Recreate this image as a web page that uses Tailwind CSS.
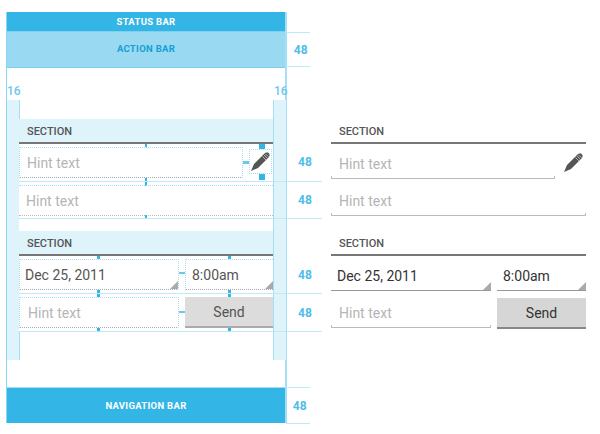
<!DOCTYPE html>
<html>
<head>
<meta charset="utf-8">
<script src="https://cdn.jsdelivr.net/npm/@tailwindcss/browser@4"></script>
</head>
<body class="bg-white">
<div class="w-[600px] h-[434px] overflow-hidden flex font-['Roboto',sans-serif] text-[#555]">

  <!-- Blueprint -->
  <div class="w-[325px] shrink-0 pl-[6px] pt-[12px]">
    <div class="relative w-[281px] h-[411px] flex flex-col border-l border-r-2 border-l-[#8bd6f3] border-r-[#a5dff5]">
      <div class="h-[20px] pt-[1px] bg-[#33b5e5] flex items-center justify-center text-white text-[9.5px] font-bold tracking-[0.3px] border-b border-[#7fd0ee]">STATUS BAR</div>
      <div class="relative h-[36px] bg-[#99d9f2] flex items-center justify-center text-[#12a0d8] text-[9.5px] font-bold tracking-[0.3px] border-b border-[#7fd0ee]">
        ACTION BAR
        <div class="absolute left-[279px] top-0 w-[24px] h-full border-t border-b border-[#bfe9f8] flex items-center justify-end pr-[2px] text-[#4dbde9] text-[12px] font-bold">48</div>
      </div>
      <div class="relative flex-1">
        <span class="absolute left-0 top-[14px] text-[12px] font-medium text-[#6cc7ec]">16</span>
        <span class="absolute left-[267px] top-[14px] text-[12px] font-medium text-[#6cc7ec]">16</span>
        <div class="absolute left-0 top-[32px] w-[13px] h-[260px] bg-[#dff3fa] border-r border-[#a5dff5]"></div>
        <div class="absolute left-[266px] top-[32px] w-[13px] h-[260px] bg-[#dff3fa] border-l border-[#a5dff5]"></div>

        <div class="absolute left-[12px] top-[51px] w-[254px] bg-white">
          <!-- section 1 -->
          <div class="h-[25px] pl-[8px] pt-[3px] flex items-center bg-[#dff3fa] border-b-2 border-[#777] text-[11px] font-medium text-[#555]">SECTION</div>
          <div class="relative h-[38px] border-b border-[#bfe9f8]">
            <div class="absolute left-[126px] top-0 w-[2px] h-[3px] bg-[#33b5e5]"></div>
            <div class="absolute left-0 top-[3px] w-[224px] h-[31px] border border-dotted border-[#a5dff5] border-b-[#aaa] pl-[7px] pt-[1px] flex items-center text-[14px] text-[#b5b5b5]">Hint text</div>
            <div class="absolute left-[224px] top-[17px] w-[6px] h-[3px] bg-[#6cc7ec]"></div>
            <div class="absolute left-[230px] top-[5px] w-[23px] h-[25px] border border-dotted border-[#a5dff5] flex items-center justify-center">
              <svg width="19" height="19" viewBox="0 0 19 19"><polygon points="0,19 3,12 13.5,1.5 15,0.5 17,0.5 18.5,2 18.5,4 17.5,5.5 7,16" fill="#555"/><path d="M11.5 4.5l3.5 3.5M13 3l3.5 3.5M14.5 1.8l3 3" stroke="#ccc" stroke-width="0.8"/></svg>
            </div>
            <div class="absolute left-[240px] top-0 w-[6px] h-[5px] bg-[#33b5e5]"></div>
            <div class="absolute left-[240px] top-[30px] w-[6px] h-[6px] bg-[#33b5e5]"></div>
            <div class="absolute left-[254px] -bottom-px w-[49px] h-px bg-[#bfe9f8]"></div>
            <span class="absolute left-[279px] top-[9px] text-[12px] font-bold text-[#4dbde9]">48</span>
            <div class="absolute left-[126px] top-[34px] w-[2px] h-[3px] bg-[#33b5e5]"></div>
          </div>
          <div class="relative h-[37px] border-b border-[#bfe9f8]">
            <div class="absolute left-[126px] top-0 w-[2px] h-[4px] bg-[#33b5e5]"></div>
            <div class="absolute left-0 top-[3px] w-[254px] h-[31px] border-t border-dotted border-[#a5dff5] pl-[7px] pt-[1px] flex items-center text-[14px] text-[#b5b5b5] border-b border-b-[#bbb]">Hint text</div>
            <div class="absolute left-[254px] -bottom-px w-[49px] h-px bg-[#bfe9f8]"></div>
            <span class="absolute left-[279px] top-[9px] text-[12px] font-bold text-[#4dbde9]">48</span>
            <div class="absolute left-[126px] top-[33px] w-[2px] h-[3px] bg-[#33b5e5]"></div>
          </div>
          <div class="h-[12px]"></div>

          <!-- section 2 -->
          <div class="h-[25px] pl-[8px] pt-[3px] flex items-center bg-[#dff3fa] border-b-2 border-[#777] text-[11px] font-medium text-[#555]">SECTION</div>
          <div class="relative h-[38px] border-b border-[#bfe9f8]">
            <div class="absolute left-[78px] top-0 w-[3px] h-[3px] bg-[#33b5e5]"></div>
            <div class="absolute left-[209px] top-0 w-[3px] h-[3px] bg-[#33b5e5]"></div>
            <div class="absolute left-0 top-[3px] w-[160px] h-[31px] border border-dotted border-[#a5dff5] border-b-[#aaa] pl-[5px] pt-[2px] flex items-center text-[14px] text-[#555]">Dec 25, 2011
              <div class="absolute right-0 bottom-0 w-0 h-0 border-l-[8px] border-l-transparent border-b-[8px] border-b-[#aaa]"></div>
            </div>
            <div class="absolute left-[160px] top-[16px] w-[6px] h-[2px] bg-[#6cc7ec]"></div>
            <div class="absolute left-[166px] top-[3px] w-[88px] h-[31px] border-t border-l border-dotted border-[#a5dff5] border-b border-b-[#aaa] pl-[6px] pt-[2px] flex items-center text-[14px] text-[#555]">8:00am
              <div class="absolute right-0 bottom-0 w-0 h-0 border-l-[8px] border-l-transparent border-b-[8px] border-b-[#aaa]"></div>
            </div>
            <div class="absolute left-[78px] top-[34px] w-[3px] h-[3px] bg-[#33b5e5]"></div>
            <div class="absolute left-[209px] top-[34px] w-[3px] h-[3px] bg-[#33b5e5]"></div>
            <div class="absolute left-[254px] -bottom-px w-[49px] h-px bg-[#bfe9f8]"></div>
            <span class="absolute left-[279px] top-[10px] text-[12px] font-bold text-[#4dbde9]">48</span>
          </div>
          <div class="relative h-[38px] border-b border-[#bfe9f8]">
            <div class="absolute left-[78px] top-0 w-[3px] h-[3px] bg-[#33b5e5]"></div>
            <div class="absolute left-[209px] top-0 w-[3px] h-[3px] bg-[#33b5e5]"></div>
            <div class="absolute left-0 top-[3px] w-[160px] h-[31px] border border-dotted border-[#a5dff5] border-b-[#aaa] pl-[8px] pt-[2px] flex items-center text-[14px] text-[#b5b5b5]">Hint text</div>
            <div class="absolute left-[160px] top-[17px] w-[6px] h-[2px] bg-[#6cc7ec]"></div>
            <div class="absolute left-[166px] top-[3px] w-[88px] h-[31px] bg-[#dcdcdc] border-b-2 border-[#aaa] pt-[2px] flex items-center justify-center text-[14px] text-[#555]">Send</div>
            <div class="absolute left-[78px] top-[34px] w-[3px] h-[3px] bg-[#33b5e5]"></div>
            <div class="absolute left-[209px] top-[34px] w-[3px] h-[3px] bg-[#33b5e5]"></div>
            <div class="absolute left-[254px] -bottom-px w-[49px] h-px bg-[#bfe9f8]"></div>
            <span class="absolute left-[279px] top-[10px] text-[12px] font-bold text-[#4dbde9]">48</span>
          </div>
        </div>
      </div>
      <div class="relative h-[36px] pt-[1px] bg-[#33b5e5] flex items-center justify-center text-white text-[9.5px] font-bold tracking-[0.3px] border-t border-[#a5dff5]">
        NAVIGATION BAR
        <div class="absolute left-[279px] -top-px w-[24px] h-[37px] border-t border-b border-[#bfe9f8] flex items-center justify-end pr-[3px] text-[#4dbde9] text-[12px] font-bold">48</div>
      </div>
    </div>
  </div>

  <!-- Clean mock -->
  <div class="ml-[6px] pt-[119px] shrink-0 w-[255px]">
    <div class="h-[25px] pl-[8px] pt-[3px] flex items-center border-b-2 border-[#777] text-[11px] font-medium text-[#555]">SECTION</div>
    <div class="flex h-[37px]">
      <div class="relative w-[224px] h-[35px] border-b border-[#bbb] pl-[8px] pt-[6px] flex items-center text-[14px] text-[#b5b5b5]">Hint text
        <div class="absolute left-0 bottom-0 w-px h-[2px] bg-[#bbb]"></div>
        <div class="absolute right-0 bottom-0 w-px h-[2px] bg-[#bbb]"></div>
      </div>
      <div class="flex-1 flex items-start justify-end pr-[3px] pt-[9px]">
        <svg width="19" height="19" viewBox="0 0 19 19"><polygon points="0,19 3,12 13.5,1.5 15,0.5 17,0.5 18.5,2 18.5,4 17.5,5.5 7,16" fill="#555"/><path d="M11.5 4.5l3.5 3.5M13 3l3.5 3.5M14.5 1.8l3 3" stroke="#ccc" stroke-width="0.8"/></svg>
      </div>
    </div>
    <div class="h-[38px]">
      <div class="relative h-[35px] border-b border-[#bbb] pl-[8px] pt-[6px] flex items-center text-[14px] text-[#b5b5b5]">Hint text
        <div class="absolute left-0 bottom-0 w-px h-[2px] bg-[#bbb]"></div>
        <div class="absolute right-0 bottom-0 w-px h-[2px] bg-[#bbb]"></div>
      </div>
    </div>
    <div class="h-[12px]"></div>
    <div class="h-[25px] pl-[8px] pt-[4px] flex items-center border-b-2 border-[#777] text-[11px] font-medium text-[#555]">SECTION</div>
    <div class="flex gap-[6px] h-[42px]">
      <div class="relative w-[160px] h-[35px] border-b border-[#999] pl-[6px] pt-[6px] flex items-center text-[14px] text-[#333]">Dec 25, 2011
        <div class="absolute right-0 bottom-0 w-0 h-0 border-l-[8px] border-l-transparent border-b-[8px] border-b-[#aaa]"></div>
      </div>
      <div class="relative flex-1 h-[35px] border-b border-[#999] pl-[6px] pt-[6px] flex items-center text-[14px] text-[#333]">8:00am
        <div class="absolute right-0 bottom-0 w-0 h-0 border-l-[8px] border-l-transparent border-b-[8px] border-b-[#aaa]"></div>
      </div>
    </div>
    <div class="flex gap-[6px]">
      <div class="relative w-[160px] h-[30px] border-b border-[#bbb] pl-[8px] pt-[2px] flex items-center text-[14px] text-[#b5b5b5]">Hint text
        <div class="absolute left-0 bottom-0 w-px h-[2px] bg-[#bbb]"></div>
        <div class="absolute right-0 bottom-0 w-px h-[2px] bg-[#bbb]"></div>
      </div>
      <div class="flex-1 h-[31px] bg-[#d6d6d6] border-b-2 border-[#888] pt-[2px] flex items-center justify-center text-[14px] text-[#333]">Send</div>
    </div>
  </div>
</div>
</body>
</html>
